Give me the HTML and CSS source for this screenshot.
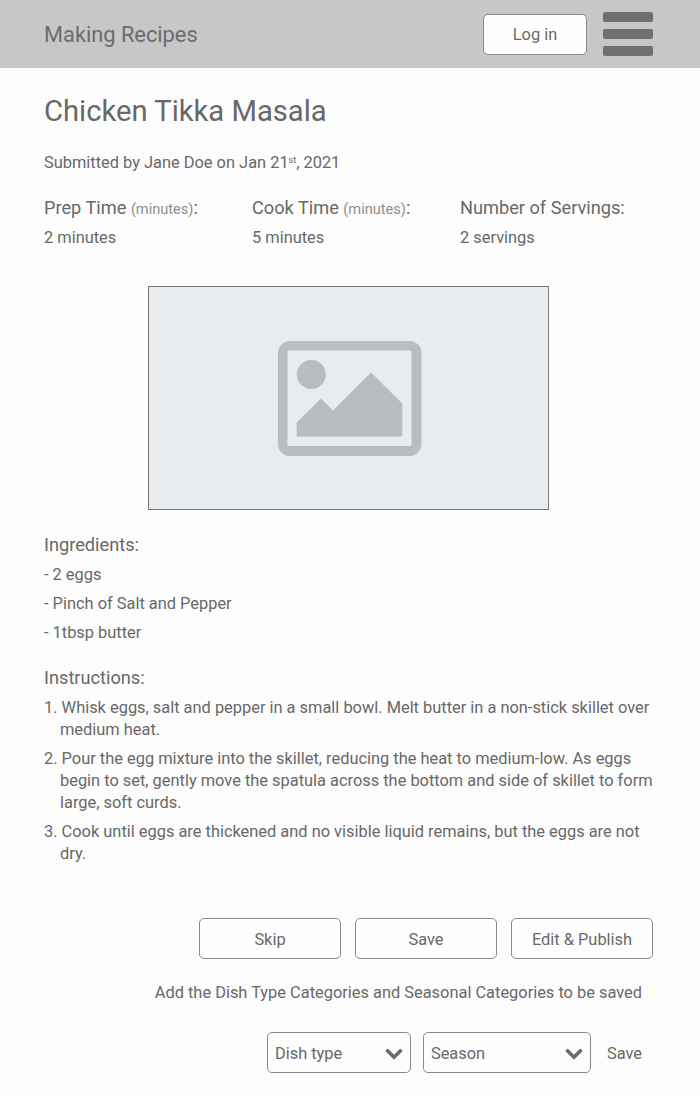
FILE: index.html
```html
<!DOCTYPE html>
<html lang="en">
<head>
<meta charset="utf-8">
<title>Making Recipes</title>
<link rel="stylesheet" href="styles.css">
</head>
<body>
<header class="topbar">
  <div class="brand">Making Recipes</div>
  <button class="button login">Log in</button>
  <div class="menu"><span class="bar"></span><span class="bar"></span><span class="bar"></span></div>
</header>
<main class="content">
  <h1 class="title">Chicken Tikka Masala</h1>
  <p class="byline">Submitted by Jane Doe on Jan 21<span class="ordinal">st</span>, 2021</p>
  <section class="facts">
    <div><h2 class="heading">Prep Time <span class="unit">(minutes)</span>:</h2><p class="value">2 minutes</p></div>
    <div><h2 class="heading">Cook Time <span class="unit">(minutes)</span>:</h2><p class="value">5 minutes</p></div>
    <div><h2 class="heading">Number of Servings:</h2><p class="value">2 servings</p></div>
  </section>
  <div class="photo">
    <svg class="photo-icon" width="144" height="115" viewBox="0 0 144 115" fill="#b9bdc0">
      <path fill-rule="evenodd" d="M12 0H131.500A12 12 0 0 1 143.500 12V103A12 12 0 0 1 131.500 115H12A12 12 0 0 1 0 103V12A12 12 0 0 1 12 0ZM11 9.500Q9.500 9.500 9.500 11V103.500Q9.500 105 11 105H132Q133.500 105 133.500 103.500V11Q133.500 9.500 132 9.500Z"/>
      <circle cx="33.300" cy="33.500" r="14.500"/>
      <path d="M18.700 95.500V81.500L43 57.500L55 69.500L93 31.500L124.300 62.500V95.500Z"/>
    </svg>
  </div>
  <section class="ingredients">
    <h2 class="heading">Ingredients:</h2>
    <ul class="list">
      <li class="item">- 2 eggs</li>
      <li class="item">- Pinch of Salt and Pepper</li>
      <li class="item">- 1tbsp butter</li>
    </ul>
  </section>
  <section class="instructions">
    <h2 class="heading">Instructions:</h2>
    <div class="list">
      <p class="item step">1. Whisk eggs, salt and pepper in a small bowl. Melt butter in a non-stick skillet over<br>medium heat.</p>
      <p class="item step">2. Pour the egg mixture into the skillet, reducing the heat to medium-low. As eggs<br>begin to set, gently move the spatula across the bottom and side of skillet to form<br>large, soft curds.</p>
      <p class="item step">3. Cook until eggs are thickened and no visible liquid remains, but the eggs are not<br>dry.</p>
    </div>
  </section>
  <div class="actions">
    <button class="button">Skip</button>
    <button class="button">Save</button>
    <button class="button">Edit &amp; Publish</button>
  </div>
  <p class="hint">Add the Dish Type Categories and Seasonal Categories to be saved</p>
  <div class="filters">
    <div class="select dish">Dish type<svg class="chevron" width="18" height="12" viewBox="0 0 18 12"><path d="M1.500 1.800L9 9.200L16.500 1.800" fill="none" stroke="#6c6c6c" stroke-width="3.600"/></svg></div>
    <div class="select season">Season<svg class="chevron" width="18" height="12" viewBox="0 0 18 12"><path d="M1.500 1.800L9 9.200L16.500 1.800" fill="none" stroke="#6c6c6c" stroke-width="3.600"/></svg></div>
    <span class="save-link">Save</span>
  </div>
</main>
</body>
</html>
```
FILE: styles.css
```css
* { box-sizing: border-box; }
body { margin: 0; background: #fdfdfd; color: #686868; font: 16.4px/22px Roboto, sans-serif; }
h1, h2, p, ul { margin: 0; padding: 0; font-weight: 400; list-style: none; }
.topbar { height: 68px; background: #c7c7c7; padding: 0 47px 0 44px; display: flex; align-items: center; }
.brand { flex: 1; padding-top: 2px; font-size: 21.8px; line-height: 24px; color: #6c6c6c; }
.button { height: 41px; padding: 2px 0 0; border: 1px solid #8a8a8a; border-radius: 5px; background: #fefefe; color: #6a6a6a; font: inherit; }
.login { width: 104px; margin-right: 16px; }
.menu { width: 50px; display: flex; flex-direction: column; gap: 7px; }
.bar { height: 10px; border-radius: 2px; background: #6f6f6f; }
.content { padding: 25px 47px 0 44px; }
.title { font-size: 29.2px; line-height: 36px; }
.byline { margin-top: 23px; }
.ordinal { font-size: 9px; line-height: 0; vertical-align: 5px; }
.facts { margin-top: 22px; display: grid; grid-template-columns: 208px 208px 1fr; }
.heading { font-size: 18.2px; line-height: 24px; }
.unit { font-size: 14.6px; line-height: 0; color: #8e8e8e; }
.value { margin-top: 7px; }
.photo { width: 401px; height: 224px; margin: 37px 0 0 104px; padding-left: 2px; border: 1px solid #777; background: #e8ecee; display: flex; justify-content: center; align-items: center; }
.ingredients { margin-top: 23px; }
.instructions { margin-top: 22px; }
.list { margin-top: 7px; display: flex; flex-direction: column; gap: 7px; }
.step { padding-left: 16px; text-indent: -16px; white-space: nowrap; }
.actions { margin-top: 53px; display: flex; justify-content: flex-end; gap: 14px; }
.actions .button { width: 142px; }
.hint { margin: 23px 11px 0 0; text-align: right; }
.filters { margin-top: 28px; display: flex; align-items: center; justify-content: flex-end; padding-right: 11px; }
.select { height: 41px; border: 1px solid #8a8a8a; border-radius: 5px; padding: 2px 7px 0; display: flex; align-items: center; justify-content: space-between; }
.dish { width: 144px; margin-right: 12px; }
.season { width: 168px; margin-right: 16px; }
.save-link { padding-top: 2px; }
```
